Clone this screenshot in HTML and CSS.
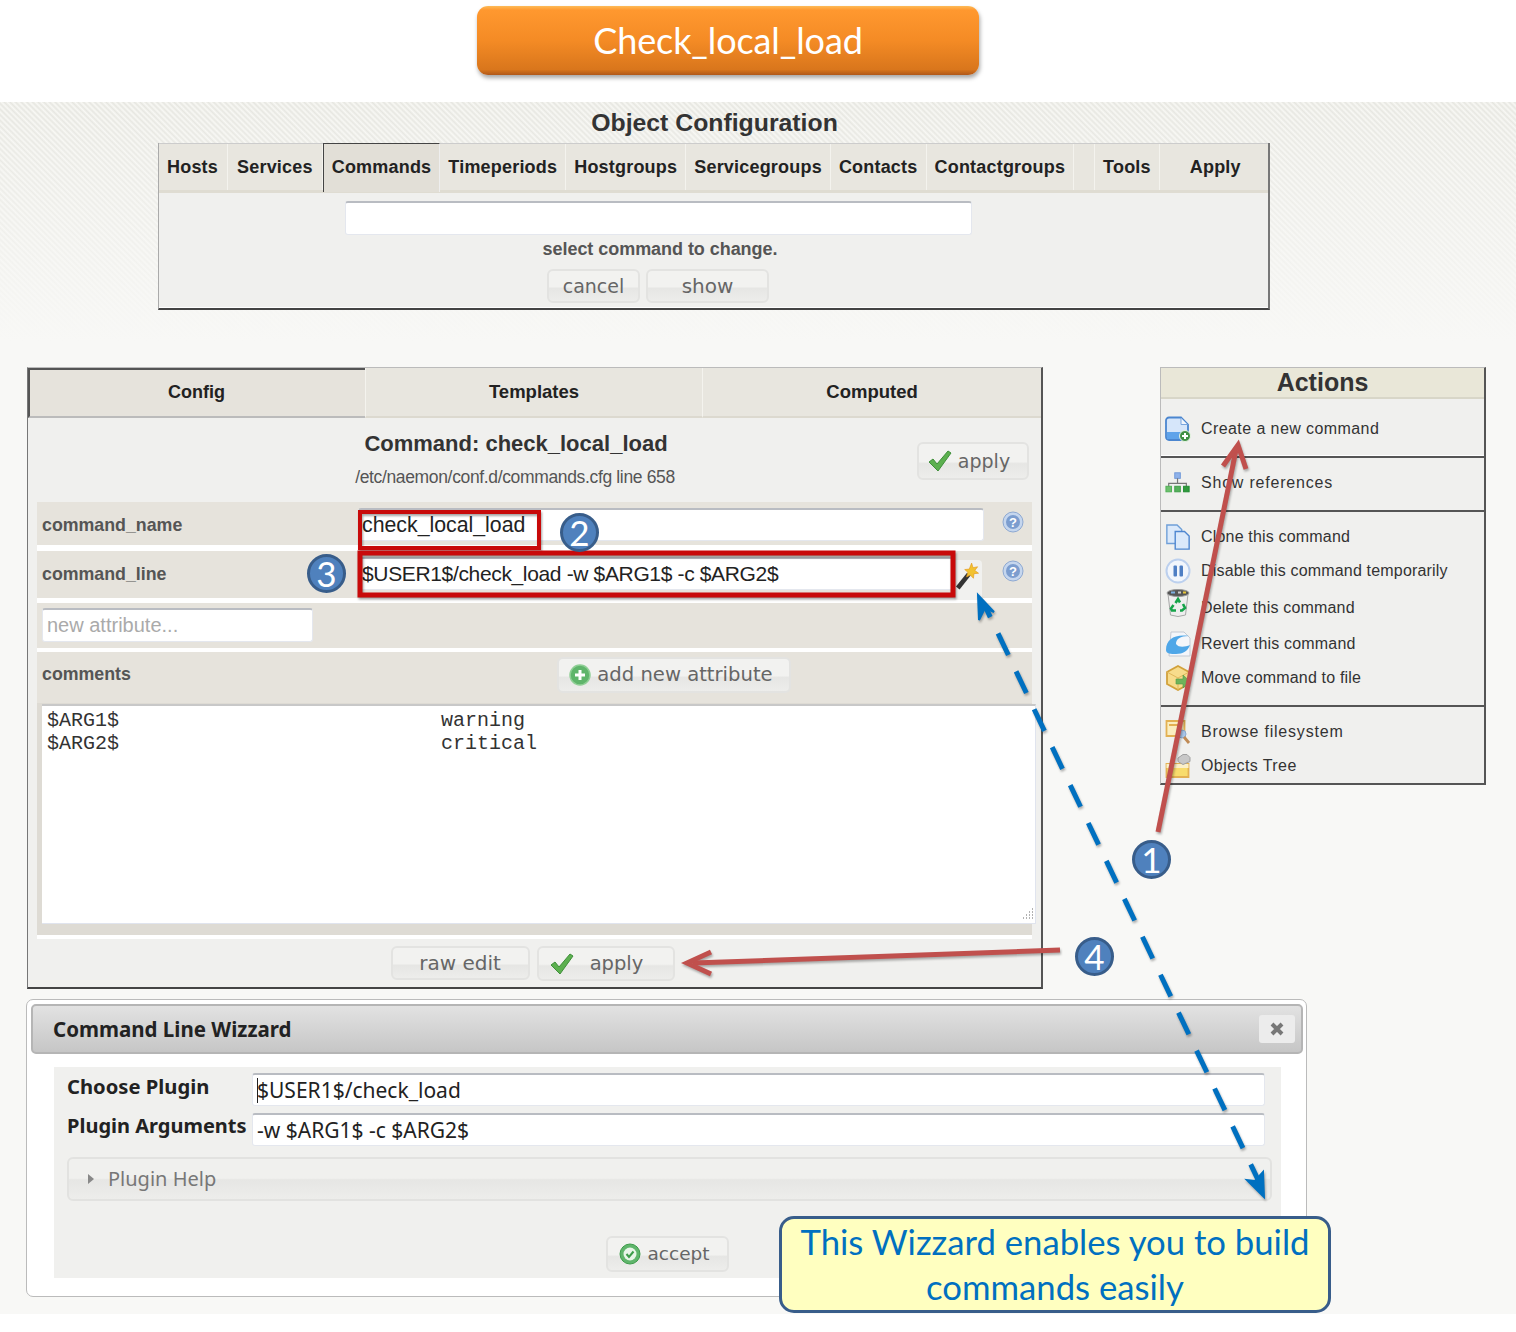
FILE: index.html
```html
<!DOCTYPE html>
<html lang="en">
<head>
<meta charset="utf-8">
<title>Check_local_load</title>
<link rel="stylesheet" href="styles.css">
</head>
<body>
<div class="page">
  <header class="banner"><div class="banner-pill">Check_local_load</div></header>

  <main class="stage">
    <h1 class="stage-title">Object Configuration</h1>

    <section class="nav-panel">
      <nav class="nav-tabs">
        <span class="nav-tab nav-tab-first">Hosts</span>
        <span class="nav-tab nav-tab-wide">Services</span>
        <span class="nav-tab nav-tab-active">Commands</span>
        <span class="nav-tab">Timeperiods</span>
        <span class="nav-tab">Hostgroups</span>
        <span class="nav-tab">Servicegroups</span>
        <span class="nav-tab">Contacts</span>
        <span class="nav-tab">Contactgroups</span>
        <span class="nav-tab nav-tab-spacer"></span>
        <span class="nav-tab">Tools</span>
        <span class="nav-tab nav-tab-apply">Apply</span>
      </nav>
      <div class="nav-body">
        <div class="field nav-field"></div>
        <div class="nav-hint">select command to change.</div>
        <div class="nav-buttons">
          <span class="btn btn-cancel">cancel</span>
          <span class="btn btn-show">show</span>
        </div>
      </div>
    </section>

    <div class="columns">
      <section class="config">
        <div class="config-tabs">
          <span class="config-tab config-tab-active">Config</span>
          <span class="config-tab">Templates</span>
          <span class="config-tab">Computed</span>
        </div>
        <div class="config-head">
          <div class="config-heading">
            <h2 class="config-title">Command: check_local_load</h2>
            <div class="config-path">/etc/naemon/conf.d/commands.cfg line 658</div>
          </div>
          <span class="btn btn-top-apply">
            <svg class="check-icon" viewBox="0 0 24 22"><path d="M1 12l4-3 4 5L20 1l3 2L10 21z" fill="#5cb04f" stroke="#3f8f3a" stroke-width="1"/></svg>
            apply
          </span>
        </div>
        <div class="rows">
          <div class="row row-name">
            <span class="row-label">command_name</span>
            <div class="field field-name">check_local_load</div>
            <svg class="help" viewBox="0 0 22 22"><circle cx="11" cy="11" r="10" fill="#c5d6ee" stroke="#8ea9d2"/><circle cx="11" cy="11" r="7" fill="#7c9dcf"/><text x="11" y="15.500" class="help-q">?</text></svg>
          </div>
          <div class="row row-line">
            <span class="row-label">command_line</span>
            <div class="field field-line">$USER1$/check_load -w $ARG1$ -c $ARG2$</div>
            <span class="wand">
              <svg viewBox="0 0 26 30" width="24" height="28"><path d="M3 28L15 13" stroke="#333" stroke-width="5"/><path d="M18 1l1.500 5 5-1-3 4 4 3-5 .5-.5 5-3.500-3.500-4 2 1.500-5-3.500-3 5-.5z" fill="#f2c230" stroke="#e59a1c" stroke-width=".7"/></svg>
            </span>
            <svg class="help" viewBox="0 0 22 22"><circle cx="11" cy="11" r="10" fill="#c5d6ee" stroke="#8ea9d2"/><circle cx="11" cy="11" r="7" fill="#7c9dcf"/><text x="11" y="15.500" class="help-q">?</text></svg>
          </div>
          <div class="row row-new">
            <div class="field field-new">new attribute...</div>
          </div>
          <div class="row row-comments">
            <span class="row-label">comments</span>
            <span class="btn btn-add">
              <svg class="round-icon" viewBox="0 0 22 22"><circle cx="11" cy="11" r="10" fill="#5fb56b" stroke="#8fcf95" stroke-width="1.500"/><path d="M11 6v10M6 11h10" stroke="#fff" stroke-width="3"/></svg>
              add new attribute
            </span>
          </div>
          <div class="row-text">
            <div class="textbox">
              <span>$ARG1$</span><span>warning</span>
              <span>$ARG2$</span><span>critical</span>
              <svg class="grip" viewBox="0 0 14 14"><path d="M12 2h1M9 5h1M12 5h1M6 8h1M9 8h1M12 8h1M3 11h1M6 11h1M9 11h1M12 11h1" stroke="#999" stroke-width="1.500"/></svg>
            </div>
          </div>
        </div>
        <div class="config-foot">
          <span class="btn btn-raw">raw edit</span>
          <span class="btn btn-apply">
            <svg class="check-icon" viewBox="0 0 24 22"><path d="M1 12l4-3 4 5L20 1l3 2L10 21z" fill="#5cb04f" stroke="#3f8f3a" stroke-width="1"/></svg>
            <span>apply</span>
          </span>
        </div>
      </section>

      <aside class="actions">
        <h2 class="actions-title">Actions</h2>
        <div class="act-group act-group-first">
          <div class="act">
            <svg class="act-icon" viewBox="0 0 26 26"><path d="M4 1.500h12l7 7V21a3 3 0 0 1-3 3H4a3 3 0 0 1-3-3V4.500a3 3 0 0 1 3-3z" fill="#d6e6fa" stroke="#4b86cf" stroke-width="1.800"/><path d="M16 2v6.500h6.500" fill="#f2f7fe" stroke="#7aa6dd"/><rect x="2" y="16" width="18" height="7" fill="#5fa3ea"/><circle cx="20" cy="20" r="5.500" fill="#3f8f44" stroke="#e9f5e6"/><path d="M20 17v6M17 20h6" stroke="#fff" stroke-width="2"/></svg>
            Create a new command
          </div>
        </div>
        <div class="act-group act-group-single">
          <div class="act act-wide">
            <svg class="act-icon" viewBox="0 0 28 24"><rect x="10.500" y="1" width="6" height="6" fill="#8fb2ea" stroke="#6f97d8"/><path d="M13.500 7v5M4 16v-3.500h19V16" stroke="#777" stroke-width="1.300" fill="none"/><rect x="1" y="15.500" width="6" height="6" fill="#6cc06c" stroke="#4fae54"/><rect x="10.500" y="15.500" width="6" height="6" fill="#55b05a" stroke="#3c9c46"/><rect x="20" y="15.500" width="6" height="6" fill="#2f9a3c" stroke="#1f8a30"/></svg>
            Show references
          </div>
        </div>
        <div class="act-group act-group-many">
          <div class="act act-narrow">
            <svg class="act-icon" viewBox="0 0 28 28"><path d="M2 1h11l5 5v15H2z" fill="#dbe9fa" stroke="#6f9fd8" stroke-width="1.500"/><path d="M11 8h10l5 5v14H11z" fill="#dbe9fa" stroke="#4f87d0" stroke-width="1.500"/></svg>
            Clone this command
          </div>
          <div class="act act-narrow">
            <svg class="act-icon" viewBox="0 0 26 26"><circle cx="13" cy="13" r="11.500" fill="#f2f6fc" stroke="#bcd0ee" stroke-width="2"/><rect x="8.500" y="7.500" width="3.500" height="11" rx="1" fill="#4f7fc4"/><rect x="14.500" y="7.500" width="3.500" height="11" rx="1" fill="#4f7fc4"/></svg>
            Disable this command temporarily
          </div>
          <div class="act act-narrow act-delete">
            <svg class="act-icon act-icon-bin" viewBox="0 0 26 30"><path d="M3 6h20l-2.500 21q-7.500 3-15 0z" fill="#eeeeee" stroke="#a8a8a8"/><ellipse cx="13" cy="5" rx="11" ry="3.500" fill="#555" stroke="#999"/><path d="M6 4.500h4" stroke="#7fb0e0" stroke-width="2"/><path d="M13 4.500h3" stroke="#cccccc" stroke-width="2"/><path d="M18 4.500h3" stroke="#e8c63a" stroke-width="2"/><path d="M10.500 15l2.500-4 2 3.500M18 16l2 4-3 2.500h-2M11 22.500H7l-1-2 2.500-3.500" stroke="#16a44a" stroke-width="2.600" fill="none"/></svg>
            Delete this command
          </div>
          <div class="act act-narrow act-revert">
            <svg class="act-icon" viewBox="0 0 26 26"><path d="M6 1h13l6 6v18H4z" fill="#f4f6fa" stroke="#c4c9d2"/><path d="M1 19C1 8 10 3 24 5c-9 0-13 3-13 8 3 4 9 3 14 1-2 6-7 9-14 9-5 0-10 0-10-4z" fill="#4fa7e8"/></svg>
            Revert this command
          </div>
          <div class="act act-narrow act-move">
            <svg class="act-icon" viewBox="0 0 26 26"><path d="M13 1l11 6v12l-11 6-11-6V7z" fill="#f7dc8c" stroke="#d1a13b" stroke-width="1.800"/><path d="M2 7l11 6 11-6M13 13v12" stroke="#e0b75a" fill="none"/><path d="M11 14h7v-4l7 6.500-7 6.500v-4h-7z" fill="#6fb35a" stroke="#4f9a48" stroke-width=".6"/></svg>
            Move command to file
          </div>
        </div>
        <div class="act-group">
          <div class="act act-wide">
            <svg class="act-icon" viewBox="0 0 26 26"><path d="M1.500 2h18v15h-18z" fill="#fbeec0" stroke="#e3b153" stroke-width="1.800"/><path d="M4 6h9" stroke="#e3b153" stroke-width="2"/><circle cx="17" cy="15" r="4" fill="#a9c6ea" stroke="#8aa9d0"/><path d="M19 18l5 6" stroke="#c08a55" stroke-width="2.800"/></svg>
            Browse filesystem
          </div>
          <div class="act">
            <svg class="act-icon" viewBox="0 0 26 26"><path d="M1.500 11h22v13h-22z" fill="#f8dc6c" stroke="#e3b153" stroke-width="1.800"/><path d="M1.500 11h22v4h-22z" fill="#fbf0c8"/><path d="M13 5l5-3.500h4l3 3v4l-7 3-5-3z" fill="#c8c8c8" stroke="#a0a0a0"/></svg>
            Objects Tree
          </div>
        </div>
      </aside>
    </div>

    <section class="wizard">
      <div class="wizard-bar">
        <span class="wizard-title">Command Line Wizzard</span>
        <span class="wizard-close"><svg viewBox="0 0 16 16" width="16" height="16"><path d="M3 3l10 10M13 3L3 13" stroke="#777" stroke-width="4"/></svg></span>
      </div>
      <div class="wizard-body">
        <div class="wizard-row">
          <span class="wizard-label">Choose Plugin</span>
          <div class="field wizard-field wizard-field-caret">$USER1$/check_load</div>
        </div>
        <div class="wizard-row">
          <span class="wizard-label wizard-label-long">Plugin Arguments</span>
          <div class="field wizard-field">-w $ARG1$ -c $ARG2$</div>
        </div>
        <div class="plugin-help"><span class="plugin-caret"></span>Plugin Help</div>
        <div class="wizard-foot">
          <span class="btn btn-accept">
            <svg class="round-icon" viewBox="0 0 22 22"><circle cx="11" cy="11" r="10" fill="#5fb56b" stroke="#3d9c4a"/><circle cx="11" cy="11" r="6.500" fill="#e8f5e8"/><path d="M7.500 11l2.500 3 4.500-5.500" stroke="#3d9c4a" stroke-width="2" fill="none"/></svg>
            accept
          </span>
        </div>
      </div>
    </section>
  </main>

  <svg class="overlay" viewBox="0 0 1516 1332" width="1516" height="1332">
    <g class="arrow-shadow">
      <path d="M1158 832L1236 450" class="red-line"/>
      <path d="M1223 466L1238 445L1246 469" class="red-line red-head"/>
      <path d="M1060 950L693 963" class="red-line"/>
      <path d="M711 952L687 963L711 974" class="red-line red-head"/>
      <path d="M1261 1186L985 606" class="blue-line"/>
      <path d="M978 595L994 612L985 608L979 620z" class="blue-head"/>
      <path d="M1264 1197L1247 1180L1255 1181L1263 1172z" class="blue-head"/>
    </g>
    <rect x="360" y="512" width="179" height="36" class="red-box"/>
    <rect x="360" y="553" width="593" height="42" class="red-box red-box-wide"/>
  </svg>

  <span class="marker marker-1">1</span>
  <span class="marker marker-2">2</span>
  <span class="marker marker-3">3</span>
  <span class="marker marker-4">4</span>
  <div class="callout">This Wizzard enables you to build commands easily</div>
</div>
</body>
</html>
```
FILE: styles.css
```css
* { box-sizing: border-box; }
html, body { margin: 0; padding: 0; background: #fff; }
body { font-family: "Liberation Sans", Arial, sans-serif; color: #333; }
.page { position: relative; width: 1516px; height: 1332px; overflow: hidden; }

/* banner */
.banner { height: 102px; padding: 6px 0 0 477px; }
.banner-pill {
  width: 502px; height: 69px; border-radius: 11px;
  background: linear-gradient(#fdbb57 0, #ff982f 6%, #f48b25 50%, #d9761c 92%, #b0581a 100%);
  box-shadow: 1px 3px 4px rgba(0,0,0,.35);
  color: #fff; font: 36px/68px Lato, sans-serif; text-align: center; letter-spacing: -.1px;
}

/* stage */
.stage {
  height: 1212px; padding-bottom: 17px;
  background:
    linear-gradient(to bottom, rgba(248,248,246,.1) 0, rgba(248,248,246,.5) 110px, #f8f8f6 240px),
    repeating-linear-gradient(45deg, #e4e4de 0, #f8f8f4 2px, #e4e4de 4px);
}
.stage-title {
  margin: 0; height: 41px; padding-left: 1px; text-align: center; width: 1428px;
  font: bold 24.800px/41px "Liberation Sans", sans-serif; color: #333;
}

/* object nav */
.nav-panel {
  margin-left: 158px; width: 1112px; height: 167px;
  background: #f0f0ee;
  border-left: 1px solid #aaa; border-right: 2px solid #777; border-bottom: 2px solid #444;
  box-shadow: inset 0 -1px 0 #fff;
}
.nav-tabs {
  display: flex; height: 50px; background: #e8e6df;
  border-top: 1px solid #ccc; border-bottom: 3px solid #dfdcd2;
}
.nav-tab {
  padding: 0 8px; border-right: 1px solid #f4f3ee;
  font: bold 18px/46px "Liberation Sans", sans-serif; letter-spacing: .2px; color: #222; white-space: nowrap;
}
.nav-tab-first { padding: 0 9px 0 8px; }
.nav-tab-wide { padding: 0 9px; }
.nav-tab-active {
  background: #e2dfd7; border: 1px solid #444; border-right: 1px solid #eee; border-bottom: 0;
  margin-top: -1px; height: 49px; line-height: 46px;
}
.nav-tab-spacer { width: 21px; padding: 0; }
.nav-tab-apply { flex: 1; padding-left: 30px; border: 0; }
.nav-body { display: flex; flex-direction: column; align-items: center; padding: 8px 297px 0 186px; }
.field {
  background: #fff; border: 1px solid #e4e7ee; border-top: 2px solid #b9bcc2; border-radius: 3px;
  color: #222; white-space: nowrap;
}
.nav-field { width: 627px; height: 34px; flex: none; }
.nav-hint { font: bold 18px/20px "Liberation Sans", sans-serif; letter-spacing: -.05px; color: #555; margin: 4px 0 0 4px; }
.nav-buttons { display: flex; gap: 6px; margin-top: 10px; }

/* buttons */
.btn {
  display: inline-flex; align-items: center; justify-content: center;
  border: 2px solid #e3e3e1; border-radius: 6px;
  background: linear-gradient(#f2f2f0 0, #f2f2f0 52%, #e6e6e4 58%, #ededeb 100%);
  font: 20px/1 "DejaVu Sans", sans-serif; color: #666; white-space: nowrap;
}
.btn-cancel { width: 93px; height: 34px; font-size: 19px; }
.btn-show { width: 123px; height: 34px; }
.btn-top-apply { position: absolute; left: 889px; top: 25px; width: 112px; height: 38px; gap: 6px; padding-right: 8px; font-size: 19px; }
.btn-add { width: 234px; height: 36px; gap: 6px; margin-left: 199px; padding-right: 6px; font-size: 19.600px; }
.btn-raw { width: 139px; height: 34px; }
.btn-apply { width: 138px; height: 35px; gap: 16px; padding-right: 18px; font-size: 19.500px; }
.btn-accept { width: 123px; height: 36px; gap: 6px; padding-right: 6px; font-size: 18.500px; }
.check-icon { width: 24px; height: 22px; }
.round-icon { width: 22px; height: 22px; }

/* columns */
.columns { display: flex; gap: 117px; margin: 57px 0 0 27px; }
.config {
  position: relative; width: 1016px; height: 622px;
  background: #f0f0ee;
  border-left: 1px solid #777; border-right: 2px solid #555; border-bottom: 2px solid #444;
  border-top: 1px solid #bbb;
}
.config-tabs { display: grid; grid-template-columns: 337px 337px 1fr; height: 49px; background: #e8e6df; }
.config-tab {
  text-align: center; font: bold 18.500px/48px "Liberation Sans", sans-serif; color: #222;
  border-left: 1px solid #f4f3ee; border-bottom: 2px solid #dcd9cf;
}
.config-tab-active {
  background: #e6e3dc; border: 0; border-top: 2px solid #555; border-left: 2px solid #555; border-bottom: 2px solid #bbb;
  font-size: 18px; line-height: 45px; padding-right: 2px;
}
.config-head { position: relative; height: 85px; padding-left: 87px; width: 889px; }
.config-heading { text-align: center; padding-top: 15px; }
.config-title { margin: 0; font: bold 22px/24px "Liberation Sans", sans-serif; color: #333; }
.config-path { margin-top: 11px; padding-right: 2px; font: 17.500px/20px "Liberation Sans", sans-serif; color: #555; letter-spacing: -.35px; }
.rows { margin: 0 9px; padding-bottom: 4px; background: #fff; }
.row { display: flex; align-items: flex-start; background: #e6e3dc; position: relative; }
.row-name { height: 43px; margin-bottom: 6px; padding-top: 6px; }
.row-line { height: 47px; margin-bottom: 5px; padding-top: 6px; }
.row-new { height: 45px; margin-bottom: 4px; padding: 5px 0 0 5px; }
.row-comments { height: 51px; padding-top: 5px; }
.row-label { width: 321px; padding: 5px 0 0 5px; font: bold 17.800px/24px "Liberation Sans", sans-serif; color: #555; }
.field-name, .field-line { height: 33px; font: 21.300px/30px "Liberation Sans", sans-serif; padding-left: 3px; }
.field-name { width: 626px; }
.field-line { width: 596px; letter-spacing: -.35px; font-size: 21px; }
.field-new { width: 271px; height: 34px; font: 20px/30px "Liberation Sans", sans-serif; color: #aaa; padding-left: 4px; }
.help { position: absolute; right: 8px; top: 8px; width: 22px; height: 24px; }
.help-q { font: bold 13px "Liberation Sans", sans-serif; fill: #fff; text-anchor: middle; }
.wand {
  position: absolute; left: 916px; top: 9px; width: 29px; height: 40px;
  background: #f1f1ef; border-radius: 4px; padding: 2px;
}
.row-text { background: #dedbd4; height: 232px; padding: 1px 0 0 5px; position: relative; }
.textbox {
  position: relative; width: 994px; height: 220px; background: #fff; padding: 3px 5px;
  border-top: 2px solid #c8c8c8; border-right: 1px solid #e0e4ee; border-bottom: 1px solid #e0e4ee;
  display: grid; grid-template-columns: 394px 1fr; grid-template-rows: 23px 23px;
  font: 20px/23px "Liberation Mono", monospace; color: #333;
}
.grip { position: absolute; right: 1px; bottom: 2px; width: 14px; height: 14px; }
.config-foot { display: flex; justify-content: center; gap: 7px; padding: 7px 4px 0 0; }

/* actions */
.actions {
  width: 326px; height: 418px; background: #f0f0ee;
  border: 1px solid #bbb; border-right: 2px solid #555; border-bottom: 2px solid #555;
}
.actions-title {
  margin: 0; height: 31px; background: #e9e7d8; border-bottom: 2px solid #d8d6c8;
  text-align: center; font: bold 25px/29px "Liberation Sans", sans-serif; color: #333;
}
.act-group { padding-top: 8px; }
.act-group + .act-group { border-top: 2px solid #555; }
.act-group-first { height: 57px; padding-top: 13px; box-shadow: inset 0 -1px 0 #fff; }
.act-group-single { height: 54px; }
.act-group-many { height: 195px; }
.act {
  display: flex; align-items: center; height: 34px; gap: 10px; padding-left: 4px;
  font: 16px/34px "Liberation Sans", sans-serif; letter-spacing: .42px; color: #333; white-space: nowrap;
}
.act-wide { letter-spacing: .8px; }
.act-narrow { letter-spacing: .18px; }
.act-delete { height: 40px; }
.act-revert { height: 32px; }
.act-move { height: 36px; }
.act-icon { width: 26px; height: 26px; flex: none; }
.act-icon-bin { height: 30px; margin-top: -10px; }

/* wizard */
.wizard {
  margin: 10px 0 0 26px; width: 1281px; height: 298px; background: #fff;
  border: 1px solid #bbb; border-radius: 7px; padding: 4px;
}
.wizard-bar {
  display: flex; align-items: center; justify-content: space-between;
  height: 50px; width: 1272px; padding: 0 6px 0 20px;
  background: linear-gradient(#e2e2e2, #c6c6c6); border: 2px solid #b5b5b5; border-radius: 5px;
}
.wizard-title { font: bold 20.500px/1 "Noto Sans", sans-serif; color: #222; }
.wizard-close {
  display: flex; align-items: center; justify-content: center;
  width: 36px; height: 28px; background: #ececec; border-radius: 3px;
}
.wizard-body {
  margin: 13px 0 0 23px; width: 1227px; height: 211px; background: #f0f0ee;
  padding: 6px 0 0 13px;
}
.wizard-row { display: flex; height: 33px; margin-bottom: 7px; }
.wizard-label { width: 185px; font: bold 20.200px/26px "Noto Sans", sans-serif; color: #222; white-space: nowrap; }
.wizard-label-long { font-size: 20px; }
.wizard-field { width: 1013px; height: 33px; font: 21px/31px "Noto Sans", sans-serif; padding-left: 4px; }
.wizard-field-caret::before {
  content: ""; display: inline-block; width: 1px; height: 25px; margin-right: -1px;
  background: #222; vertical-align: -5px;
}
.plugin-help {
  display: flex; align-items: center; width: 1205px; height: 44px; margin-top: 11px;
  border: 2px solid #e2e2e0; border-radius: 6px;
  background: linear-gradient(#f0f0ee 0, #f0f0ee 48%, #e6e6e4 52%, #ededeb 100%);
  font: 20px/1 "Noto Sans", sans-serif; color: #777; padding-left: 19px;
}
.plugin-caret {
  width: 0; height: 0; margin-right: 14px;
  border-left: 6px solid #888; border-top: 5px solid transparent; border-bottom: 5px solid transparent;
}
.wizard-foot { padding: 35px 0 0 539px; }

/* annotations */
.overlay { position: absolute; left: 0; top: 0; pointer-events: none; }
.arrow-shadow { filter: drop-shadow(1px 2px 1px rgba(0,0,0,.3)); }
.red-line { stroke: #c0504d; stroke-width: 5; fill: none; }
.red-head { stroke-linejoin: miter; }
.blue-line { stroke: #0070c0; stroke-width: 5; stroke-dasharray: 24 18; fill: none; }
.blue-head { fill: #0070c0; stroke: #0070c0; stroke-width: 2; }
.red-box { fill: none; stroke: #c80a0a; stroke-width: 4; filter: drop-shadow(1px 2px 1px rgba(0,0,0,.35)); }
.red-box-wide { stroke-width: 5; }
.marker {
  position: absolute; width: 39px; height: 39px; border-radius: 50%;
  background: #4f81bd; border: 3px solid #385d8a; color: #fff;
  font: 35px/32px Lato, sans-serif; text-align: center;
}
.marker-1 { left: 1132px; top: 840px; }
.marker-2 { left: 560px; top: 513px; }
.marker-3 { left: 307px; top: 554px; }
.marker-4 { left: 1075px; top: 937px; }
.callout {
  position: absolute; left: 779px; top: 1216px; width: 552px; height: 97px;
  background: #ffffc0; border: 3px solid #385d8a; border-radius: 15px;
  padding: 0 10px; text-align: center;
  font: 34.700px/45px Lato, sans-serif; color: #0070c0;
}
```
